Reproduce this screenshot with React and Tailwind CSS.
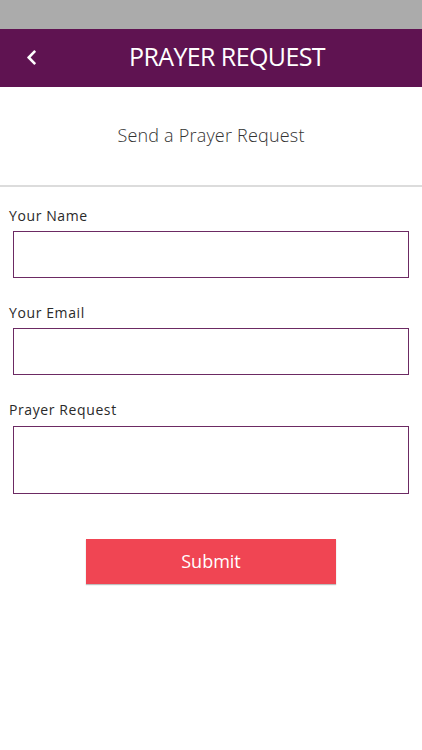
import { FaChevronLeft } from "react-icons/fa";

export default function App() {
    const fields = [
        { label: "Your Name", height: "h-[47px]", mt: "mt-[6px]" },
        { label: "Your Email", height: "h-[47px]", mt: "mt-[6px]" },
        { label: "Prayer Request", height: "h-[68px]", mt: "mt-[7px]", area: true },
    ];

    return (
        <div className="w-[422px] h-[750px] bg-white font-['Open_Sans',sans-serif]">
            {/* status bar */}
            <div className="h-[29px] bg-[#ababab]" />

            {/* header */}
            <div className="h-[58px] bg-[#5f1351] flex items-center relative">
                <button className="absolute left-[25px] top-[20px] text-white">
                    <FaChevronLeft className="w-[13px] h-[17px]" />
                </button>
                <h1 className="w-full text-center text-white text-[25px] tracking-[-0.6px] pl-[32px] pb-[3px]">
                    PRAYER REQUEST
                </h1>
            </div>

            {/* subtitle */}
            <div className="h-[98px] flex items-center justify-center pb-[2px]">
                <p className="text-[18px] font-light text-[#333] tracking-[0.2px]">
                    Send a Prayer Request
                </p>
            </div>
            <div className="h-[2px] bg-[#dcdcdc]" />

            {/* form */}
            <div className="pt-[20px] pl-[9px] pr-[13px]">
                {fields.map((f, i) => (
                    <div key={f.label} className={i > 0 ? "mt-[26px]" : ""}>
                        <label className="block text-[14px] leading-[18px] text-[#2a2a2a] tracking-[0.6px]">
                            {f.label}
                        </label>
                        <div
                            className={`${f.mt} ml-[4px] ${f.height} border-[1.5px] border-[#6c2a63] bg-white`}
                        />
                    </div>
                ))}
            </div>

            <div className="mt-[45px] flex justify-center">
                <button className="w-[250px] h-[45px] bg-[#f04553] text-white text-[18px] shadow-[0_1px_1px_rgba(0,0,0,0.25)]">
                    Submit
                </button>
            </div>
        </div>
    );
}
